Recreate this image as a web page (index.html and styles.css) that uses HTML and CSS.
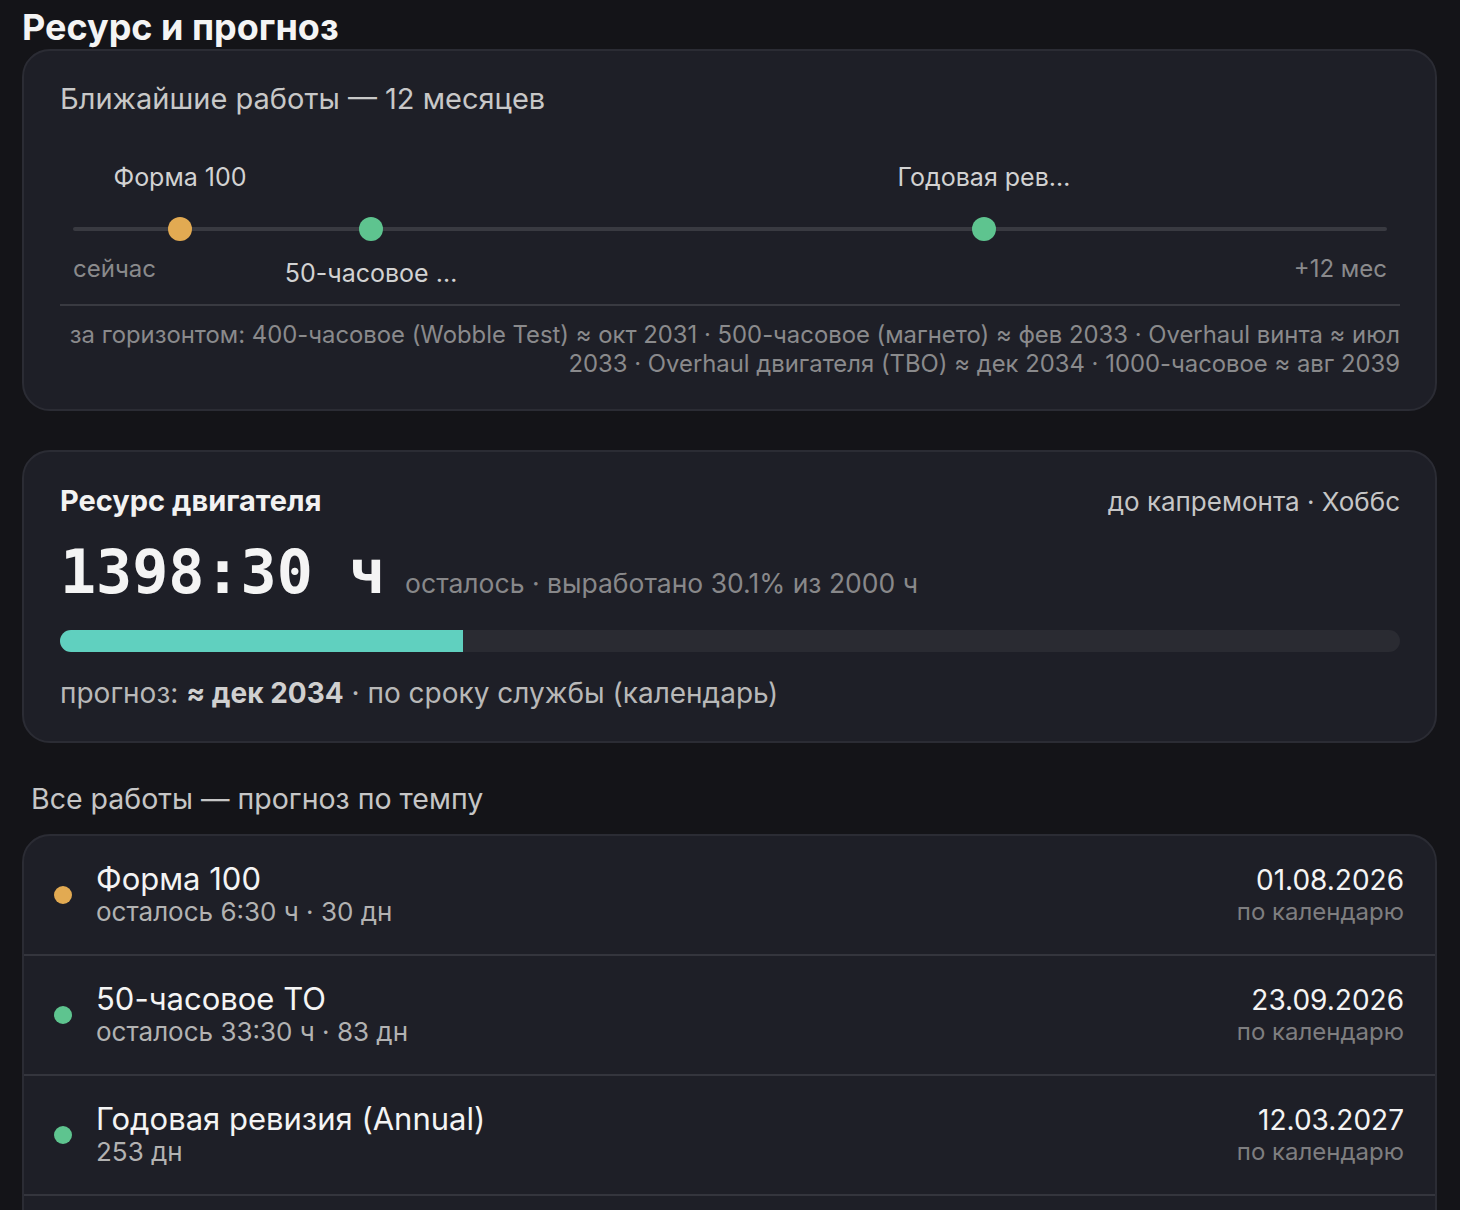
FILE: index.html
```html
<!DOCTYPE html>
<html lang="ru">
<head>
    <meta charset="UTF-8">
    <meta name="viewport" content="width=device-width, initial-scale=1.0">
    <title>Ресурс и прогноз</title>
    <link rel="stylesheet" href="styles.css">
</head>

<body>

    <h1 class="page-title">Ресурс и прогноз</h1>

    <section class="card upcoming">
        <h2 class="card-heading">Ближайшие работы — 12 месяцев</h2>
        <div class="timeline">
            <div class="axis">
                <div class="mark" style="left: 8.14%">
                    <span class="dot dot-warn"></span>
                    <span class="mark-label above">Форма 100</span>
                </div>
                <div class="mark" style="left: 22.68%">
                    <span class="dot dot-ok"></span>
                    <span class="mark-label below">50-часовое …</span>
                </div>
                <div class="mark" style="left: 69.33%">
                    <span class="dot dot-ok"></span>
                    <span class="mark-label above">Годовая рев…</span>
                </div>
            </div>
            <div class="axis-ends">
                <span>сейчас</span>
                <span>+12 мес</span>
            </div>
        </div>
        <p class="horizon">за горизонтом: 400-часовое (Wobble Test) ≈ окт 2031 · 500-часовое (магнето) ≈ фев 2033 · Overhaul винта ≈ июл 2033 · Overhaul двигателя (TBO) ≈ дек 2034 · 1000-часовое ≈ авг 2039</p>
    </section>

    <section class="card engine">
        <div class="engine-head">
            <h2 class="engine-title">Ресурс двигателя</h2>
            <span class="engine-meta">до капремонта · Хоббс</span>
        </div>
        <div class="engine-value">
            <span class="big-number">1398:30 ч</span>
            <span class="value-note">осталось · выработано 30.1% из 2000 ч</span>
        </div>
        <div class="progress">
            <div class="progress-fill" style="width: 30.1%"></div>
        </div>
        <p class="forecast">прогноз: <b>≈ дек 2034</b> · по сроку службы (календарь)</p>
    </section>

    <h3 class="section-label">Все работы — прогноз по темпу</h3>

    <ul class="card task-list">
        <li class="task">
            <span class="dot small dot-warn"></span>
            <div class="task-info">
                <div class="task-name">Форма 100</div>
                <div class="task-left">осталось 6:30 ч · 30 дн</div>
            </div>
            <div class="task-date">
                <div class="date">01.08.2026</div>
                <div class="date-note">по календарю</div>
            </div>
        </li>
        <li class="task">
            <span class="dot small dot-ok"></span>
            <div class="task-info">
                <div class="task-name">50-часовое ТО</div>
                <div class="task-left">осталось 33:30 ч · 83 дн</div>
            </div>
            <div class="task-date">
                <div class="date">23.09.2026</div>
                <div class="date-note">по календарю</div>
            </div>
        </li>
        <li class="task">
            <span class="dot small dot-ok"></span>
            <div class="task-info">
                <div class="task-name">Годовая ревизия (Annual)</div>
                <div class="task-left">253 дн</div>
            </div>
            <div class="task-date">
                <div class="date">12.03.2027</div>
                <div class="date-note">по календарю</div>
            </div>
        </li>
    </ul>

</body>
</html>
```

FILE: styles.css
```css
body {
    font-family: Inter, "Liberation Sans", sans-serif;
    background-color: #141418;
    color: #f2f2f2;
    margin: 0;
    padding: 0 23px 0 22px;
}
h1, h2, h3, p, ul {
    margin: 0;
    padding: 0;
}
.page-title {
    font-size: 36px;
    font-weight: 700;
    line-height: 43px;
    padding-top: 6px;
    color: #f4f4f4;
}
.card {
    background-color: #1e1f27;
    border: 2px solid #2b2c34;
    border-radius: 28px;
    padding: 31px 35px 31px 36px;
}
.card-heading {
    font-size: 29px;
    font-weight: 400;
    line-height: 34px;
    color: #c8c8c8;
}

/* timeline */
.timeline {
    padding: 0 13px;
}
.axis {
    position: relative;
    height: 4px;
    margin-top: 111px;
    background-color: #393a41;
    border-radius: 2px;
}
.mark {
    position: absolute;
    top: 2px;
    width: 0;
    height: 0;
}
.dot {
    display: inline-block;
    width: 24px;
    height: 24px;
    border-radius: 50%;
}
.mark .dot {
    position: absolute;
    left: -12px;
    top: -12px;
}
.dot-warn {
    background-color: #e2aa52;
}
.dot-ok {
    background-color: #5ec48f;
}
.mark-label {
    position: absolute;
    left: 0;
    transform: translateX(-50%);
    white-space: nowrap;
    font-size: 25px;
    line-height: 29px;
    color: #d2d2d2;
}
.mark-label.above {
    bottom: 37px;
}
.mark-label.below {
    top: 30px;
}
.axis-ends {
    display: flex;
    justify-content: space-between;
    margin-top: 23px;
    font-size: 24px;
    line-height: 29px;
    color: #8a8a8c;
}
.horizon {
    margin-top: 21px;
    padding-top: 14px;
    border-top: 2px solid #393a41;
    text-align: right;
    font-size: 23.85px;
    line-height: 29px;
    color: #8a8a8c;
}

/* engine */
.engine {
    margin-top: 39px;
    padding-top: 33px;
}
.engine-head {
    display: flex;
    justify-content: space-between;
    align-items: baseline;
    line-height: 31px;
}
.engine-title {
    font-size: 29px;
    font-weight: 700;
    color: #f2f2f2;
}
.engine-meta {
    font-size: 26px;
    color: #c6c6c6;
}
.engine-value {
    display: flex;
    align-items: baseline;
    gap: 20px;
    margin-top: 25px;
}
.big-number {
    font-family: "DejaVu Sans Mono", monospace;
    font-weight: 700;
    font-size: 60px;
    line-height: 60px;
    color: #f4f4f4;
}
.value-note {
    font-size: 26.5px;
    color: #88888a;
}
.progress {
    height: 22px;
    margin-top: 28px;
    background-color: #2a2b32;
    border-radius: 11px;
    overflow: hidden;
}
.progress-fill {
    height: 100%;
    background-color: #60d0bf;
}
.forecast {
    margin-top: 24px;
    font-size: 28px;
    line-height: 34px;
    color: #b8b8b8;
}
.forecast b {
    color: #d0d0d0;
}

/* all tasks */
.section-label {
    margin: 39px 0 19px 9px;
    font-size: 28.5px;
    font-weight: 400;
    line-height: 33px;
    color: #c6c6c6;
}
.task-list {
    list-style: none;
    padding: 0 0 40px;
    border-radius: 28px 28px 0 0;
}
.task {
    display: flex;
    align-items: center;
    gap: 24px;
    padding: 26px 31px 27px 30px;
    border-bottom: 2px solid #34353d;
}
.dot.small {
    width: 18px;
    height: 18px;
    flex-shrink: 0;
}
.task-info {
    flex: 1;
}
.task-name {
    font-size: 31px;
    line-height: 34px;
    color: #f4f4f4;
}
.task-left {
    margin-top: 1px;
    font-size: 26px;
    line-height: 30px;
    color: #b2b2b2;
}
.task-date {
    text-align: right;
}
.date {
    font-size: 28px;
    line-height: 34px;
    color: #f4f4f4;
}
.date-note {
    font-size: 24px;
    line-height: 30px;
    color: #7e7e80;
}
```
